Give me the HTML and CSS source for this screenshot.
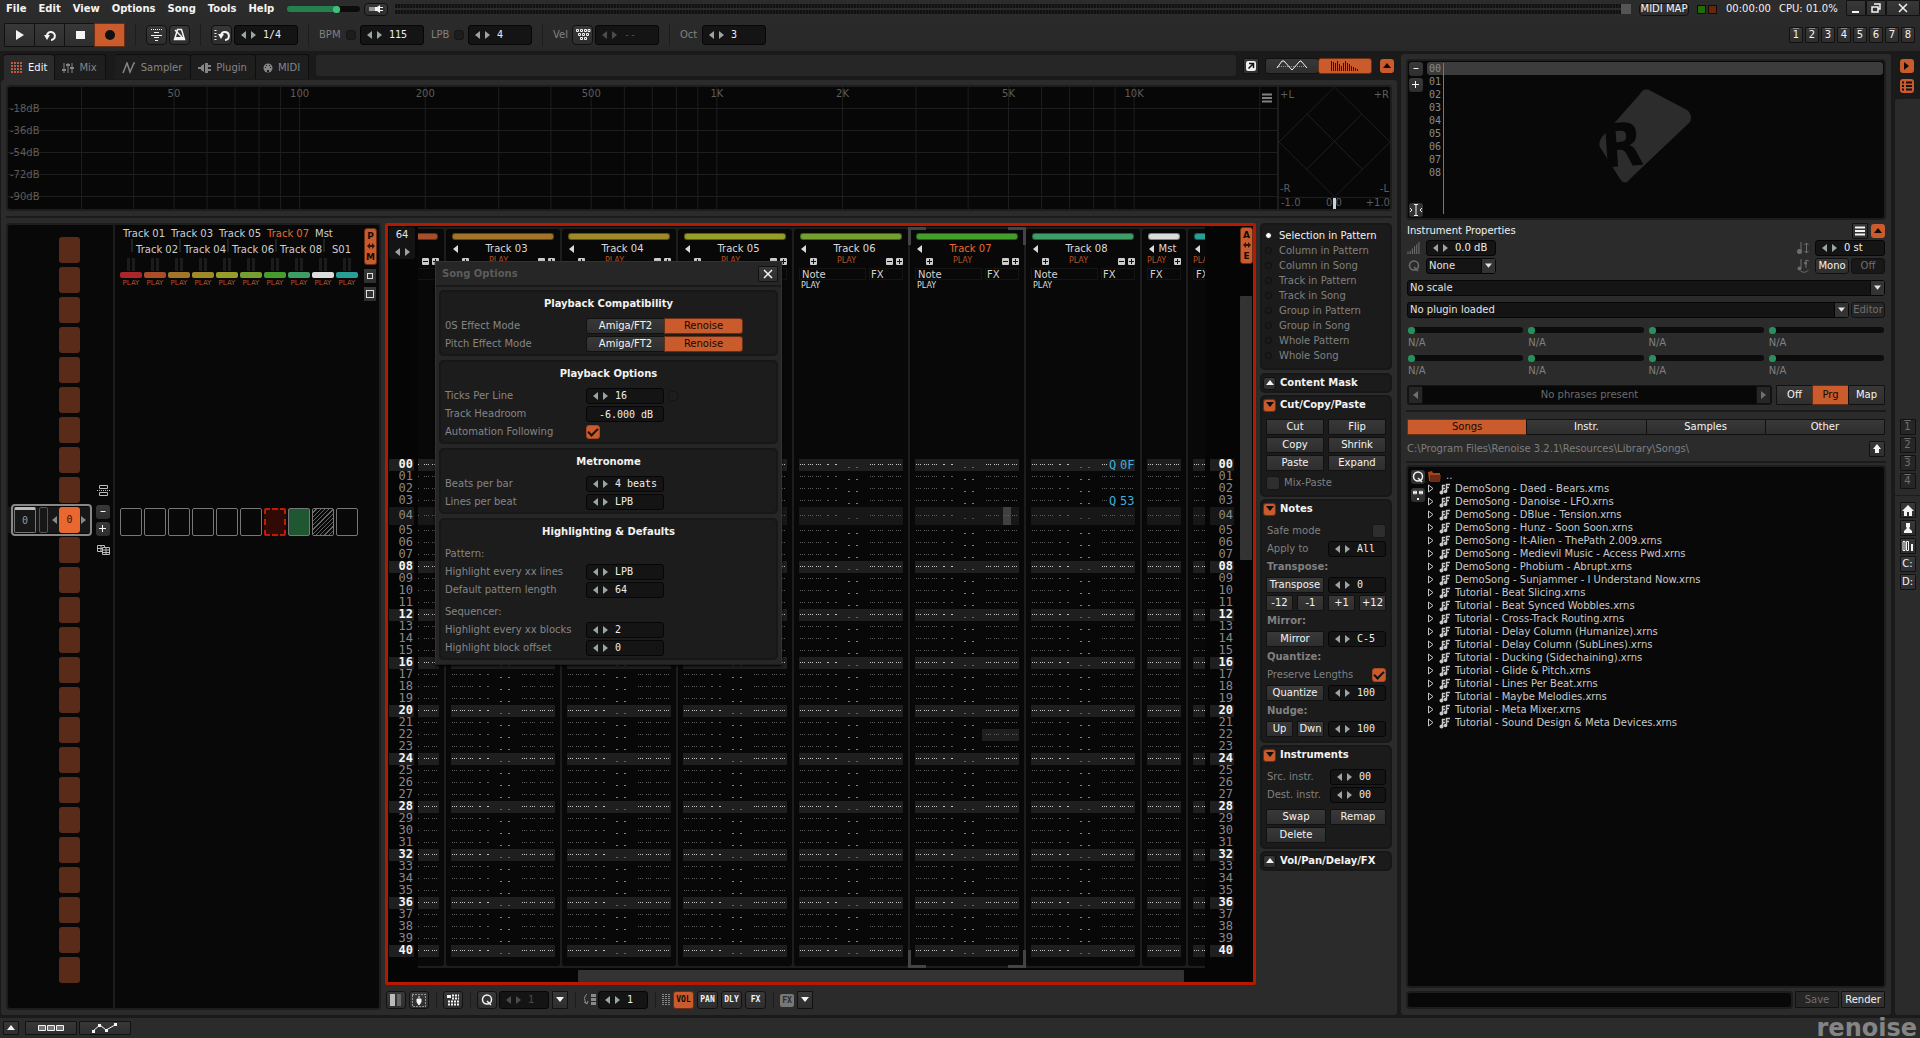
FILE: index.html
```html
<!DOCTYPE html>
<html lang="en">
<head>
<meta charset="utf-8">
<title>Renoise</title>
<link rel="stylesheet" href="styles.css">
</head>
<body>
<svg class="sprite" aria-hidden="true">
  <symbol id="i-play" viewBox="0 0 12 12"><path d="M2 1l8 5-8 5z" fill="currentColor"/></symbol>
  <symbol id="i-loop" viewBox="0 0 14 12"><path d="M4 8a4 4 0 1 1 4 3" fill="none" stroke="currentColor" stroke-width="2"/><path d="M1 6h6l-3 5z" fill="currentColor"/></symbol>
  <symbol id="i-stop" viewBox="0 0 12 12"><path d="M2 2h9v8H2z" fill="currentColor"/></symbol>
  <symbol id="i-rec" viewBox="0 0 12 12"><circle cx="6" cy="6" r="5" fill="#111"/></symbol>
  <symbol id="i-follow" viewBox="0 0 13 13"><path d="M1 1.500h11" stroke="currentColor" stroke-dasharray="1 1"/><path d="M4 4.500h5M1 7.500h11M4 9.500h5M5 12.500h3" stroke="currentColor"/></symbol>
  <symbol id="i-metro" viewBox="0 0 13 13"><path d="M4.500 1.500h4l3 10h-10z" fill="none" stroke="currentColor" stroke-width="1.500"/><path d="M2 2l7 7" stroke="currentColor" stroke-width="1.500"/><path d="M2 9h9v3H2z" fill="currentColor"/></symbol>
  <symbol id="i-blockloop" viewBox="0 0 16 12"><path d="M1.500 1v10" stroke="currentColor" stroke-width="2" stroke-dasharray="1 2"/><path d="M7 6a4 4 0 1 1 4 5" fill="none" stroke="currentColor" stroke-width="2"/><path d="M4 5h6l-3 5z" fill="currentColor"/></symbol>
  <symbol id="i-keys" viewBox="0 0 16 13"><path d="M1.500 1.500h2v2h-2zM5.500 1.500h2v2h-2zM9.500 1.500h2v2h-2zM13 1.500h2v2h-2zM3.500 5.500h2v2h-2zM7.500 5.500h2v2h-2zM11.500 5.500h2v2h-2zM5.500 9.500h2v2h-2zM9.500 9.500h2v2h-2z" fill="none" stroke="currentColor"/></symbol>
  <symbol id="i-plug" viewBox="0 0 16 8"><path d="M1 2h6v4H1z" fill="#999"/><path d="M7 2h2l3-2v8l-3-2H7z" fill="currentColor"/><path d="M12 2.500h3M12 5.500h3" stroke="currentColor"/></symbol>
  <symbol id="i-grid" viewBox="0 0 12 12"><path d="M0 1h12M0 4h12M0 7h12M0 10h12" stroke="currentColor" stroke-width="2" stroke-dasharray="2 1"/></symbol>
  <symbol id="i-mix" viewBox="0 0 12 12"><path d="M2 1v10M6 1v10M10 1v10" stroke="currentColor"/><path d="M0 8h4M4 3h4M8 6h4" stroke="currentColor" stroke-width="2"/></symbol>
  <symbol id="i-wave" viewBox="0 0 14 12"><path d="M1 11L5 1l3 9 4-9h1" fill="none" stroke="currentColor" stroke-width="1.500"/></symbol>
  <symbol id="i-plugin" viewBox="0 0 13 10"><path d="M0 5h4" stroke="currentColor" stroke-width="2"/><path d="M3 3l3-2v8L3 7zM7 0h3v10H7z" fill="currentColor"/><path d="M10 3h3M10 7h3" stroke="currentColor" stroke-width="2"/></symbol>
  <symbol id="i-midi" viewBox="0 0 10 10"><circle cx="5" cy="5" r="4.500" fill="currentColor"/><path d="M2 4h1v1H2zM7 4h1v1H7zM3 2h1v1H3zM6 2h1v1H6zM4 7h2v2H4z" fill="#1d1d1d"/></symbol>
  <symbol id="i-popout" viewBox="0 0 12 12"><rect x="1" y="1" width="10" height="10" rx="2" fill="#eee"/><path d="M4 3.500h4.500V8M8 4L3.500 8.500" stroke="#111" stroke-width="1.500" fill="none"/></symbol>
  <symbol id="i-scope" viewBox="0 0 32 12"><path d="M1 8L6 1h2l8 9 8-9 1 0 6 7" fill="none" stroke="currentColor"/><path d="M1 6.500h30" stroke="currentColor" stroke-dasharray="1 1" opacity=".5"/></symbol>
  <symbol id="i-spec" viewBox="0 0 28 12"><path d="M.5 1v10M2.500 2v9M4.500 3v8M6.500 1v10M8.500 4v7M10.500 6v5M12.500 3v8M14.500 1v10M16.500 3v8M18.500 4v7M20.500 6v5M22.500 7v4M24.500 8v3M26.500 9v2" stroke="#2a1208"/></symbol>
  <symbol id="i-up" viewBox="0 0 8 6"><path d="M0 5l4-5 4 5z" fill="currentColor"/></symbol>
  <symbol id="i-down" viewBox="0 0 8 6"><path d="M0 0h8L4 5z" fill="currentColor"/></symbol>
  <symbol id="i-left" viewBox="0 0 5 8"><path d="M5 0v8L0 4z" fill="currentColor"/></symbol>
  <symbol id="i-right" viewBox="0 0 5 8"><path d="M0 0v8l5-4z" fill="currentColor"/></symbol>
  <symbol id="i-menu" viewBox="0 0 12 10"><path d="M1 1.500h10M1 5h10M1 8.500h10" stroke="currentColor" stroke-width="2"/></symbol>
  <symbol id="i-x" viewBox="0 0 10 10"><path d="M1 1l8 8M9 1L1 9" stroke="currentColor" stroke-width="1.500"/></symbol>
  <symbol id="i-min" viewBox="0 0 10 10"><path d="M1 9h7" stroke="currentColor" stroke-width="2"/></symbol>
  <symbol id="i-restore" viewBox="0 0 10 10"><path d="M3 1h6v5H7M1 4h6v5H1z" fill="none" stroke="currentColor" stroke-width="1.500"/></symbol>
  <symbol id="i-minus" viewBox="0 0 8 8"><path d="M1.500 3.500h5" stroke="currentColor"/></symbol>
  <symbol id="i-plus" viewBox="0 0 8 8"><path d="M0 3.500h7M3.500 0v7" stroke="currentColor"/></symbol>
  <symbol id="i-boxminus" viewBox="0 0 7 7"><rect width="7" height="7" rx="1" fill="#ccc"/><path d="M1 3.500h5" stroke="#111"/></symbol>
  <symbol id="i-boxplus" viewBox="0 0 7 7"><rect width="7" height="7" rx="1" fill="#ccc"/><path d="M1 3.500h5M3.500 1v5" stroke="#111"/></symbol>
  <symbol id="i-harrow" viewBox="0 0 8 6"><path d="M0 3l3-3v2h2V0l3 3-3 3V4H3v2z" fill="#30150a"/></symbol>
  <symbol id="i-split" viewBox="0 0 13 11"><path d="M2.500.5h8v3h-8zM2.500 7.500h8v3h-8z" fill="none" stroke="currentColor"/><path d="M0 5.500h13" stroke="currentColor" stroke-dasharray="1 1"/></symbol>
  <symbol id="i-clone" viewBox="0 0 13 10"><path d="M.5.5h7v6h-7zM4 .5v6M.5 3.500h7" fill="none" stroke="currentColor"/><path d="M5.500 2.500h7v7h-7z" fill="#080808" stroke="currentColor"/><path d="M9 2.500v7M5.500 5h7M5.500 7.500h7" stroke="currentColor"/></symbol>
  <symbol id="i-bars" viewBox="0 0 12 11"><path d="M.5 9v2M2.500 8v3M4.500 6v5M6.500 4v7M8.500 2v9M10.500 0v11" stroke="currentColor"/></symbol>
  <symbol id="i-q" viewBox="0 0 12 12"><circle cx="6" cy="5.500" r="4.500" fill="none" stroke="currentColor" stroke-width="1.500"/><path d="M6 7l4 4" stroke="currentColor" stroke-width="1.500"/></symbol>
  <symbol id="i-notest" viewBox="0 0 13 12"><path d="M4.500 0v9" stroke="currentColor"/><circle cx="3" cy="9.500" r="2.500" fill="currentColor"/><path d="M10 1v10M8 3l2-2 2 2M8 9l2 2 2-2" fill="none" stroke="currentColor"/></symbol>
  <symbol id="i-glide" viewBox="0 0 13 14"><path d="M4.500 0v9M9.500 9V1l3 1" fill="none" stroke="currentColor"/><circle cx="3" cy="9.500" r="2" fill="currentColor"/><circle cx="9" cy="4" r="1.500" fill="currentColor"/><path d="M4 12q4 3 8-1" fill="none" stroke="currentColor"/></symbol>
  <symbol id="i-song" viewBox="0 0 11 12"><path d="M3.500 2v7M7.500 1v7M3 2.500h3M7 1.500h4M3 5.500h3M7 4.500h3" stroke="currentColor" stroke-width="1.500"/><circle cx="2.500" cy="9.500" r="2" fill="currentColor"/><circle cx="6.500" cy="8.500" r="1.800" fill="currentColor"/></symbol>
  <symbol id="i-tri" viewBox="0 0 6 9"><path d="M.5 1l4.500 3.500L.5 8z" fill="none" stroke="currentColor"/></symbol>
  <symbol id="i-folder" viewBox="0 0 13 11"><path d="M0 1l4-1 1 2h7v8H1z" fill="#a8431a"/><path d="M2 4h11l-1 7H2z" fill="#6d2c14"/></symbol>
  <symbol id="i-mask" viewBox="0 0 12 12"><path d="M1 3.500h4M3 1.500v4M7 3.500h4M9 1.500v4M1 2l4 3M5 2L1 5M7 2l4 3M11 2L7 5" stroke="currentColor"/><path d="M5 9h2v2H5z" fill="currentColor"/></symbol>
  <symbol id="i-arrowup" viewBox="0 0 10 10"><path d="M5 0l4 5H7v4H3V5H1z" fill="currentColor"/></symbol>
  <symbol id="i-home" viewBox="0 0 12 11"><path d="M6 0l6 6h-2v5H7V7H5v4H2V6H0z" fill="currentColor"/></symbol>
  <symbol id="i-user" viewBox="0 0 12 11"><path d="M4 0h4v4l-1 1 3 3v2H2V8l3-3-1-1z" fill="currentColor"/></symbol>
  <symbol id="i-lib" viewBox="0 0 12 11"><path d="M1 .5h2v9H1zM4.500.5h2v9h-2z" fill="none" stroke="currentColor"/><path d="M9 3h2v7H9z" fill="currentColor"/></symbol>
  <symbol id="i-cursor" viewBox="0 0 12 12"><path d="M4 .5h4M4 11.500h4M6 1v10M0 4l2 2-2 2M12 4l-2 2 2 2" fill="none" stroke="currentColor"/></symbol>
  <symbol id="i-list" viewBox="0 0 10 10"><path d="M0 1.500h2M0 5h2M0 8.500h2M4 1.500h6M4 5h6M4 8.500h6" stroke="#111" stroke-width="2"/></symbol>
  <symbol id="i-cols" viewBox="0 0 12 12"><path d="M0 0h5v12H0z" fill="#bbb"/><path d="M7 0h4v12H7z" fill="#666"/></symbol>
  <symbol id="i-snap" viewBox="0 0 14 13"><rect x=".5" y=".5" width="13" height="12" fill="none" stroke="currentColor" stroke-dasharray="1 2"/><path d="M7 2v2M5 5h4v3l-2 3-2-3z" fill="currentColor" stroke="currentColor"/></symbol>
  <symbol id="i-dots" viewBox="0 0 12 12"><path d="M0 1h4v3H0z" fill="currentColor"/><path d="M5 1.500h7M5 4.500h7M1 7.500h11M1 10.500h11" stroke="currentColor" stroke-width="2" stroke-dasharray="2 1"/></symbol>
  <symbol id="i-step" viewBox="0 0 14 12"><path d="M5 0Q0 4 5 10M2 8l3 2 1-3" fill="none" stroke="currentColor"/><path d="M9 0h5v3H9zM9 4h5v3H9zM9 8h5v3H9z" fill="currentColor"/></symbol>
  <symbol id="i-dim" viewBox="0 0 8 12"><path d="M1 0v12M4 0v12M7 0v12" stroke="currentColor" stroke-width="2" stroke-dasharray="1 1"/></symbol>
  <symbol id="i-blocks" viewBox="0 0 28 8"><path d="M1.500 1.500h7v5h-7zM10.500 1.500h7v5h-7zM19.500 1.500h7v5h-7z" fill="#777" stroke="currentColor"/></symbol>
  <symbol id="i-env" viewBox="0 0 28 10"><path d="M2 8l7-6 6 5 9-5" fill="none" stroke="currentColor"/><path d="M1 7h3v3H1zM7 1h3v3H7zM14 6h3v3h-3zM23 0h3v3h-3z" fill="currentColor"/></symbol>
</svg>

<header class="top">
  <div class="menubar">
    <nav class="menus" aria-label="Main menu">
      <a href="#file">File</a><a href="#edit">Edit</a><a href="#view">View</a><a href="#options">Options</a><a href="#song">Song</a><a href="#tools">Tools</a><a href="#help">Help</a>
    </nav>
    <input class="range master" type="range" min="0" max="100" value="70" aria-label="Master volume">
    <button class="btn pill" aria-label="Audio connection"><svg width="16" height="8"><use href="#i-plug"/></svg></button>
    <div class="meter"><i></i><i></i></div>
    <button class="btn pill midimap">MIDI MAP</button>
    <div class="leds"><i class="green"></i><i class="red"></i></div>
    <span class="status">00:00:00</span>
    <span class="status">CPU: 01.0%</span>
    <div class="winbtns">
      <button class="btn" aria-label="Minimize"><svg width="10" height="10"><use href="#i-min"/></svg></button>
      <button class="btn" aria-label="Restore"><svg width="10" height="10"><use href="#i-restore"/></svg></button>
      <button class="btn wide" aria-label="Close"><svg width="10" height="10"><use href="#i-x"/></svg></button>
    </div>
  </div>
  <div class="transport">
    <div class="joined play">
      <button class="btn" aria-label="Play"><svg width="12" height="12"><use href="#i-play"/></svg></button>
      <button class="btn" aria-label="Loop"><svg width="14" height="12"><use href="#i-loop"/></svg></button>
      <button class="btn" aria-label="Stop"><svg width="12" height="12"><use href="#i-stop"/></svg></button>
      <button class="btn on" aria-label="Edit mode"><svg width="12" height="12"><use href="#i-rec"/></svg></button>
    </div>
    <i class="vsep"></i>
    <div class="group">
      <button class="btn tool" aria-label="Follow"><svg width="13" height="13"><use href="#i-follow"/></svg></button>
      <button class="btn tool" aria-label="Metronome"><svg width="13" height="13"><use href="#i-metro"/></svg></button>
    </div>
    <i class="vsep"></i>
    <div class="group">
      <button class="btn tool" aria-label="Block loop"><svg width="16" height="12"><use href="#i-blockloop"/></svg></button>
      <span class="stepper tall" data-value="1/4" data-label="Block loop size"></span>
    </div>
    <i class="vsep"></i>
    <div class="group loose bpm">
      <label for="bpm">BPM</label><input type="checkbox" class="tick small" aria-label="Automate BPM"><span class="stepper tall" data-value="115" data-id="bpm"></span>
    </div>
    <div class="group loose second">
      <label for="lpb">LPB</label><input type="checkbox" class="tick small" aria-label="Automate LPB"><span class="stepper tall" data-value="4" data-id="lpb"></span>
    </div>
    <i class="vsep"></i>
    <div class="group">
      <label for="vel">Vel</label>
      <button class="btn tool" aria-label="Keyboard velocity"><svg width="16" height="13"><use href="#i-keys"/></svg></button>
      <span class="stepper tall off" data-value="--" data-id="vel"></span>
    </div>
    <i class="vsep"></i>
    <div class="group oct">
      <label for="oct">Oct</label>
      <span class="stepper tall" data-value="3" data-id="oct"></span>
    </div>
    <div class="presets">
      <button class="btn">1</button><button class="btn">2</button><button class="btn">3</button><button class="btn">4</button><button class="btn">5</button><button class="btn">6</button><button class="btn">7</button><button class="btn">8</button>
    </div>
  </div>
</header>

<main class="workspace">
  <section class="left">
    <div class="tabs">
      <button class="tab active"><svg width="12" height="12"><use href="#i-grid"/></svg>Edit</button>
      <button class="tab"><svg width="12" height="12"><use href="#i-mix"/></svg>Mix</button>
      <button class="tab apart"><svg width="14" height="12"><use href="#i-wave"/></svg>Sampler</button>
      <button class="tab"><svg width="13" height="10"><use href="#i-plugin"/></svg>Plugin</button>
      <button class="tab"><svg width="10" height="10"><use href="#i-midi"/></svg>MIDI</button>
      <div class="tabfill"></div>
      <button class="btn sq" aria-label="Detach"><svg width="12" height="12"><use href="#i-popout"/></svg></button>
      <div class="joined scopes">
        <button class="btn" aria-label="Track scopes"><svg width="32" height="12"><use href="#i-scope"/></svg></button>
        <button class="btn on" aria-label="Spectrum"><svg width="28" height="12"><use href="#i-spec"/></svg></button>
      </div>
      <button class="btn mini on" aria-label="Collapse"><svg width="8" height="6"><use href="#i-up"/></svg></button>
    </div>

    <div class="panel edit">
      <div class="analyser">
        <div class="spectrum">
          <svg id="spectrum" width="100%" height="122"></svg>
          <button class="menuicon" aria-label="Spectrum options"><svg width="12" height="10"><use href="#i-menu"/></svg></button>
        </div>
        <svg class="stereo" width="111" height="122">
          <path d="M55.500 0L111 55 55.500 110 0 55zM28 27l55 55M83 27L28 82M0 110.500h111" />
          <text x="1" y="11">+L</text><text x="110" y="11" text-anchor="end">+R</text>
          <text x="1" y="105">-R</text><text x="110" y="105" text-anchor="end">-L</text>
          <text x="2" y="119">-1.0</text><text x="55" y="119" text-anchor="middle">0.0</text><text x="111" y="119" text-anchor="end">+1.0</text>
          <rect x="54" y="111" width="3" height="11"/>
        </svg>
      </div>
      <hr>

      <div class="editzone">
        <section class="sequencer">
          <div class="slots">
            <div class="slotlist" id="slots"></div>
            <div class="slottools">
              <svg width="13" height="11"><use href="#i-split"/></svg>
              <button class="btn mini" aria-label="Remove pattern"><svg width="8" height="8"><use href="#i-minus"/></svg></button>
              <button class="btn mini" aria-label="Add pattern"><svg width="8" height="8"><use href="#i-plus"/></svg></button>
              <svg width="13" height="10"><use href="#i-clone"/></svg>
            </div>
          </div>
          <div class="matrix">
            <div class="names"><span>Track 01</span><span>Track 03</span><span>Track 05</span><span class="sel">Track 07</span><span>Mst</span></div>
            <div class="names even"><span>Track 02</span><span>Track 04</span><span>Track 06</span><span>Track 08</span><span class="send">S01</span></div>
            <div class="mcols" id="mcols"></div>
            <div class="mcells" id="mcells"></div>
          </div>
          <div class="seqside">
            <button class="btn vtoggle on" aria-label="Pattern or matrix"><b>P</b><svg width="8" height="6"><use href="#i-harrow"/></svg><b>M</b></button>
            <button class="btn mini" aria-label="Small cells"><i class="small"></i></button>
            <button class="btn mini" aria-label="Large cells"><i></i></button>
          </div>
        </section>

        <section class="editor">
          <div class="pattern">
            <div class="gutter">
              <div class="gutterhead"><div class="length"><span>64</span><div><svg width="5" height="8"><use href="#i-left"/></svg><svg width="5" height="8"><use href="#i-right"/></svg></div></div></div>
              <div class="nums"></div>
            </div>
            <div class="tracks" id="tracks"></div>
            <div class="gutter right">
              <div class="gutterhead"></div>
              <div class="nums"></div>
            </div>
            <div class="vscroll">
              <button class="btn vtoggle on" aria-label="Automation or effects"><b>A</b><svg width="8" height="6"><use href="#i-harrow"/></svg><b>E</b></button>
              <i></i>
            </div>
            <div class="hscroll"><i></i></div>
          </div>
          <div class="patbar">
            <button class="btn tool" aria-label="Columns"><svg width="12" height="12"><use href="#i-cols"/></svg></button>
            <button class="btn tool" aria-label="Wrap"><svg width="14" height="13"><use href="#i-snap"/></svg></button>
            <i class="vsep"></i>
            <button class="btn tool" aria-label="Single track edit"><svg width="12" height="12"><use href="#i-dots"/></svg></button>
            <i class="vsep"></i>
            <button class="btn tool" aria-label="Quantize"><svg width="12" height="12"><use href="#i-q"/></svg></button>
            <span class="stepper off" data-value="1" data-label="Quantize lines"></span>
            <button class="btn drop" aria-label="Quantize options"><svg width="8" height="6"><use href="#i-down"/></svg></button>
            <i class="vsep"></i>
            <svg class="dimicon" width="14" height="12"><use href="#i-step"/></svg>
            <span class="stepper" data-value="1" data-label="Edit step"></span>
            <i class="vsep"></i>
            <svg class="dimicon" width="8" height="12"><use href="#i-dim"/></svg>
            <button class="btn tiny on">VOL</button><button class="btn tiny">PAN</button><button class="btn tiny">DLY</button><button class="btn tiny">FX</button>
            <i class="vsep"></i>
            <span class="fxtag">FX</span>
            <button class="btn drop" aria-label="Effect columns"><svg width="8" height="6"><use href="#i-down"/></svg></button>
          </div>

          <div class="dialog" role="dialog" aria-label="Song Options">
            <div class="titlebar"><b>Song Options</b><button class="btn" aria-label="Close dialog"><svg width="10" height="10"><use href="#i-x"/></svg></button></div>
            <div class="sheets">
              <fieldset class="sheet">
                <h2>Playback Compatibility</h2>
                <div class="row"><span>0S Effect Mode</span><div class="joined modes"><button class="btn">Amiga/FT2</button><button class="btn on">Renoise</button></div></div>
                <div class="row"><span>Pitch Effect Mode</span><div class="joined modes"><button class="btn">Amiga/FT2</button><button class="btn on">Renoise</button></div></div>
              </fieldset>
              <fieldset class="sheet">
                <h2>Playback Options</h2>
                <div class="row"><label for="tpl">Ticks Per Line</label><span class="stepper" data-value="16" data-id="tpl"></span><input type="checkbox" class="tick small" aria-label="Automate ticks"></div>
                <div class="row"><label for="headroom">Track Headroom</label><input class="field" id="headroom" value="-6.000 dB"></div>
                <div class="row"><label for="autofol">Automation Following</label><input type="checkbox" class="tick" id="autofol" checked></div>
              </fieldset>
              <fieldset class="sheet">
                <h2>Metronome</h2>
                <div class="row"><label for="bpb">Beats per bar</label><span class="stepper" data-value="4 beats" data-id="bpb"></span></div>
                <div class="row"><label for="lines">Lines per beat</label><span class="stepper" data-value="LPB" data-id="lines"></span></div>
              </fieldset>
              <fieldset class="sheet">
                <h2>Highlighting &amp; Defaults</h2>
                <div class="row">Pattern:</div>
                <div class="row"><label for="hl">Highlight every xx lines</label><span class="stepper" data-value="LPB" data-id="hl"></span></div>
                <div class="row"><label for="dpl">Default pattern length</label><span class="stepper" data-value="64" data-id="dpl"></span></div>
                <div class="row spaced">Sequencer:</div>
                <div class="row"><label for="hb">Highlight every xx blocks</label><span class="stepper" data-value="2" data-id="hb"></span></div>
                <div class="row"><label for="hbo">Highlight block offset</label><span class="stepper" data-value="0" data-id="hbo"></span></div>
              </fieldset>
            </div>
          </div>
        </section>

        <aside class="advanced">
          <fieldset class="card scope">
            <label><input type="radio" name="scope" checked>Selection in Pattern</label>
            <label><input type="radio" name="scope">Column in Pattern</label>
            <label><input type="radio" name="scope">Column in Song</label>
            <label><input type="radio" name="scope">Track in Pattern</label>
            <label><input type="radio" name="scope">Track in Song</label>
            <label><input type="radio" name="scope">Group in Pattern</label>
            <label><input type="radio" name="scope">Group in Song</label>
            <label><input type="radio" name="scope">Whole Pattern</label>
            <label><input type="radio" name="scope">Whole Song</label>
          </fieldset>
          <div class="card"><h3><button class="btn fold" aria-label="Expand"><svg width="8" height="6"><use href="#i-up"/></svg></button>Content Mask</h3></div>
          <div class="card">
            <h3><button class="btn fold on" aria-label="Collapse"><svg width="8" height="6"><use href="#i-down"/></svg></button>Cut/Copy/Paste</h3>
            <div class="body">
              <div class="pair"><button class="btn">Cut</button><button class="btn">Flip</button></div>
              <div class="pair"><button class="btn">Copy</button><button class="btn">Shrink</button></div>
              <div class="pair"><button class="btn">Paste</button><button class="btn">Expand</button></div>
              <label class="line mix"><input type="checkbox" class="tick">Mix-Paste</label>
            </div>
          </div>
          <div class="card">
            <h3><button class="btn fold on" aria-label="Collapse"><svg width="8" height="6"><use href="#i-down"/></svg></button>Notes</h3>
            <div class="body">
              <div class="line between"><label for="safe">Safe mode</label><input type="checkbox" class="tick" id="safe"></div>
              <div class="pair"><label for="apply">Apply to</label><span class="stepper" data-value="All" data-id="apply"></span></div>
              <b class="line">Transpose:</b>
              <div class="pair"><button class="btn">Transpose</button><span class="stepper" data-value="0" data-label="Transpose amount"></span></div>
              <div class="quad"><button class="btn">-12</button><button class="btn">-1</button><button class="btn">+1</button><button class="btn">+12</button></div>
              <b class="line">Mirror:</b>
              <div class="pair"><button class="btn">Mirror</button><span class="stepper" data-value="C-5" data-label="Mirror note"></span></div>
              <b class="line">Quantize:</b>
              <div class="line between"><label for="preserve">Preserve Lengths</label><input type="checkbox" class="tick" id="preserve" checked></div>
              <div class="pair"><button class="btn">Quantize</button><span class="stepper" data-value="100" data-label="Quantize amount"></span></div>
              <b class="line">Nudge:</b>
              <div class="pair"><div class="pair inner"><button class="btn">Up</button><button class="btn">Dwn</button></div><span class="stepper" data-value="100" data-label="Nudge amount"></span></div>
            </div>
          </div>
          <div class="card">
            <h3><button class="btn fold on" aria-label="Collapse"><svg width="8" height="6"><use href="#i-down"/></svg></button>Instruments</h3>
            <div class="body">
              <div class="pair late"><label for="src">Src. instr.</label><span class="stepper" data-value="00" data-id="src"></span></div>
              <div class="pair late"><label for="dst">Dest. instr.</label><span class="stepper" data-value="00" data-id="dst"></span></div>
              <div class="pair late gaptop"><button class="btn">Swap</button><button class="btn">Remap</button></div>
              <div class="pair late"><button class="btn">Delete</button></div>
            </div>
          </div>
          <div class="card"><h3><button class="btn fold" aria-label="Expand"><svg width="8" height="6"><use href="#i-up"/></svg></button>Vol/Pan/Delay/FX</h3></div>
        </aside>
      </div>
    </div>
  </section>

  <section class="panel instruments">
    <div class="instbox">
      <div class="instbtns">
        <button class="btn mini" aria-label="Remove instrument"><svg width="8" height="8"><use href="#i-minus"/></svg></button>
        <button class="btn mini" aria-label="Add instrument"><svg width="8" height="8"><use href="#i-plus"/></svg></button>
        <button class="btn mini last" aria-label="Rename"><svg width="12" height="12"><use href="#i-cursor"/></svg></button>
      </div>
      <ol class="instlist"><li class="sel">00</li><li>01</li><li>02</li><li>03</li><li>04</li><li>05</li><li>06</li><li>07</li><li>08</li></ol>
      <svg class="emblem" width="94" height="96" viewBox="0 0 94 96">
        <path d="M41 5Q45 -2 52 2L88 21Q94 26 91 33L31 90Q26 97 21 90L16 82 1 58Q-1 53 3 48z" fill="#2c2c2c"/>
        <text x="4" y="78" fill="#080808" transform="rotate(-4 10 78)">R</text>
      </svg>
    </div>

    <div class="prophead"><h2>Instrument Properties</h2><button class="btn sq" aria-label="Menu"><svg width="12" height="10"><use href="#i-menu"/></svg></button><button class="btn mini on" aria-label="Collapse"><svg width="8" height="6"><use href="#i-up"/></svg></button></div>
    <div class="prow"><svg class="picon" width="14" height="12"><use href="#i-bars"/></svg><span class="stepper sans" data-value="0.0 dB" data-label="Volume"></span><i class="fill"></i><svg class="picon" width="14" height="12"><use href="#i-notest"/></svg><span class="stepper sans" data-value="0 st" data-label="Transpose"></span></div>
    <div class="prow"><svg class="picon" width="14" height="12"><use href="#i-q"/></svg><span class="select none"><select aria-label="Quantization"><option>None</option></select><svg width="8" height="6"><use href="#i-down"/></svg></span><i class="fill"></i><svg class="picon" width="14" height="14"><use href="#i-glide"/></svg><button class="btn p34">Mono</button><button class="btn p34 disabled deep">Off</button></div>
    <div class="prow wide"><span class="select"><select aria-label="Scale"><option>No scale</option></select><svg width="8" height="6"><use href="#i-down"/></svg></span></div>
    <div class="prow wide"><span class="select"><select aria-label="Plugin"><option>No plugin loaded</option></select><svg width="8" height="6"><use href="#i-down"/></svg></span><button class="btn p34 disabled">Editor</button></div>
    <div class="macros">
      <label><input type="range" class="range" value="0">N/A</label><label><input type="range" class="range" value="0">N/A</label><label><input type="range" class="range" value="0">N/A</label><label><input type="range" class="range" value="0">N/A</label>
      <label><input type="range" class="range" value="0">N/A</label><label><input type="range" class="range" value="0">N/A</label><label><input type="range" class="range" value="0">N/A</label><label><input type="range" class="range" value="0">N/A</label>
    </div>
    <div class="phrases">
      <div class="phrasebox"><button class="btn disabled" aria-label="Previous phrase"><svg width="5" height="8"><use href="#i-left"/></svg></button><span>No phrases present</span><button class="btn disabled" aria-label="Next phrase"><svg width="5" height="8"><use href="#i-right"/></svg></button></div>
      <div class="joined"><button class="btn">Off</button><button class="btn on">Prg</button><button class="btn">Map</button></div>
    </div>
    <hr>
    <div class="joined browse"><button class="btn on">Songs</button><button class="btn">Instr.</button><button class="btn">Samples</button><button class="btn">Other</button></div>
    <div class="path"><span>C:\Program Files\Renoise 3.2.1\Resources\Library\Songs\</span><button class="btn sq" aria-label="Parent folder"><svg width="10" height="10"><use href="#i-arrowup"/></svg></button></div>
    <hr>
    <div class="browser">
      <div class="browsebtns"><button class="btn mini" aria-label="Search"><svg width="12" height="12"><use href="#i-q"/></svg></button><button class="btn mini" aria-label="File filter"><svg width="12" height="12"><use href="#i-mask"/></svg></button></div>
      <ul id="files"></ul>
    </div>
    <div class="saverow"><input type="text" aria-label="File name"><button class="btn disabled">Save</button><button class="btn">Render</button></div>
  </section>

  <aside class="strip">
    <div class="striptop">
      <button class="btn mini on" aria-label="Hide browser"><svg width="5" height="8"><use href="#i-right"/></svg></button>
      <button class="btn mini on" aria-label="List view"><svg width="10" height="10"><use href="#i-list"/></svg></button>
    </div>
    <div class="stripbody">
      <button class="btn sq disabled num-preset">1</button><button class="btn sq disabled num-preset">2</button><button class="btn sq disabled num-preset">3</button><button class="btn sq disabled num-preset">4</button>
      <hr>
      <button class="btn sq" aria-label="Home"><svg width="12" height="11"><use href="#i-home"/></svg></button>
      <button class="btn sq" aria-label="User library"><svg width="12" height="11"><use href="#i-user"/></svg></button>
      <button class="btn sq" aria-label="Library"><svg width="12" height="11"><use href="#i-lib"/></svg></button>
      <button class="btn sq">C:</button>
      <button class="btn sq">D:</button>
    </div>
  </aside>
</main>

<footer class="bottom">
  <button class="btn arrow" aria-label="Show lower panel"><svg width="8" height="6"><use href="#i-up"/></svg></button>
  <button class="btn" aria-label="Track DSPs"><svg width="28" height="8"><use href="#i-blocks"/></svg></button>
  <button class="btn" aria-label="Automation"><svg width="28" height="10"><use href="#i-env"/></svg></button>
  <strong class="brand">renoise</strong>
</footer>
<script src="script.js"></script>
</body>
</html>
```

FILE: styles.css
```css
:root {
  --panel: #2b2b2b;
  --gap: #1a1a1a;
  --well: #080808;
  --accent: #ca5b2c;
  --text: #e4e4e4;
  --dim: #808080;
  --mono: "DejaVu Sans Mono", "Liberation Mono", monospace;
}

* { box-sizing: border-box; }

body {
  margin: 0;
  min-height: 100vh;
  display: flex;
  flex-direction: column;
  background: var(--gap);
  color: var(--text);
  font: 10px/14px "DejaVu Sans", Verdana, sans-serif;
}

.sprite { position: absolute; width: 0; height: 0; }
svg { display: block; flex: none; }
a { color: inherit; text-decoration: none; }
h2, h3, ul, ol, fieldset { margin: 0; padding: 0; border: 0; min-width: 0; list-style: none; }
button, input, select { font: inherit; color: inherit; margin: 0; padding: 0; border: 0; background: none; }
hr { width: 100%; height: 2px; margin: 0; border: 0; background: #1b1b1b; }

/* Buttons */
.btn {
  display: inline-flex;
  align-items: center;
  justify-content: center;
  flex: none;
  height: 16px;
  border: 1px solid #111;
  border-radius: 1px;
  background: linear-gradient(#383838, #2e2e2e);
  color: #f4f4f4;
  line-height: 12px;
  white-space: nowrap;
}
.btn.on { background: var(--accent); border-color: #6a2e15; color: #140a05; }
.btn.disabled { color: #707070; background: #262626; }
.btn.deep { background: #181818; }
.btn.mini { width: 14px; height: 14px; border: 0; border-radius: 3px; }
.btn.sq { width: 16px; }
.btn.drop { width: 16px; height: 18px; }
.joined { display: flex; }
.joined .btn { flex: 1 1 0; }
.joined .btn + .btn { margin-left: -1px; }

/* Steppers and inputs */
.stepper, .field, .select {
  display: flex;
  align-items: center;
  width: 78px;
  height: 16px;
  border: 1px solid #060606;
  border-radius: 3px;
  background: #141414;
  font-family: var(--mono);
}
.stepper { padding-left: 3px; color: #eee; overflow: hidden; }
.stepper.tall { width: 64px; height: 20px; }
.stepper.sans { width: 70px; font-family: inherit; }
.stepper button { display: flex; flex: none; width: 10px; justify-content: center; align-items: center; color: #9aa5a5; }
.stepper input { flex: 1; width: 0; min-width: 0; margin-left: 5px; height: 14px; }
.stepper.off, .stepper.off button { color: #4c4c4c; }
.field { text-align: center; padding-left: 2px; color: #eee; }
.select { width: 100%; font-family: inherit; }
.select select { flex: 1; appearance: none; padding-left: 2px; height: 14px; line-height: 14px; }
.select svg { width: 14px; height: 14px; padding: 4px 3px; background: #333; border-left: 1px solid #060606; }

.tick {
  appearance: none;
  flex: none;
  display: grid;
  place-items: center;
  width: 14px;
  height: 14px;
  border-radius: 3px;
  background: #2b2b2b;
  border: 1px solid #161616;
}
.tick.small { width: 10px; height: 10px; background: #1d1d1d; border-color: #151515; }
.tick:checked { background: var(--accent); border-color: #a9481f; }
.tick:checked::after { content: ""; width: 8px; height: 4px; margin-top: -2px; border: solid #111; border-width: 0 0 2px 2px; transform: rotate(-45deg); }

.range { appearance: none; display: block; width: 100%; height: 6px; border-radius: 3px; background: #0c0c0c; }
.range::-webkit-slider-thumb { appearance: none; width: 7px; height: 7px; border-radius: 3px; background: #27905c; }

/* Top bar */
.top { height: 51px; background: linear-gradient(#2c2c2c, #282828); }
.menubar { display: flex; align-items: center; height: 18px; }
.menus { display: flex; gap: 12px; margin-left: 6px; font-weight: bold; color: #f4f4f4; }
.master { width: 73px; margin-left: 13px; background: linear-gradient(90deg, #258050 66%, #0c0c0c 66%); }
.master::-webkit-slider-thumb { background: #3cc47c; }
.btn.pill { height: 13px; width: 24px; margin-left: 4px; border-radius: 4px; }
.meter { flex: 1; display: grid; gap: 2px; margin: 0 8px 0 7px; border-right: 10px solid #555; }
.meter i { height: 4px; background: repeating-linear-gradient(90deg, #121212 0 2px, #1e1e1e 2px 3px); }
.btn.midimap { width: 50px; margin: 0; }
.leds { display: flex; gap: 2px; margin: 0 9px 0 8px; }
.leds i { width: 9px; height: 9px; border: 1px solid #0c0c0c; }
.leds .green { background: #236a08; }
.leds .red { background: #6a2608; }
.status { width: 53px; white-space: nowrap; color: #f0f0f0; }
.status + .status { width: 60px; margin-right: 7px; }
.winbtns { display: flex; align-self: flex-start; }
.winbtns .btn { width: 20px; }
.winbtns .wide { width: 34px; }

.transport { display: flex; align-items: center; height: 33px; padding: 0 5px 0 4px; color: var(--dim); }
.play { width: 121px; }
.play .btn { height: 24px; }
.vsep { flex: none; width: 1px; height: 22px; margin: 0 10px; background: #1d1d1d; }
.group { display: flex; align-items: center; gap: 2px; }
.group label { min-width: 17px; }
.group.loose { gap: 4px; }
.group.bpm label { min-width: 23px; }
.group.loose.second { margin-left: 7px; }
.group.second label { min-width: 19px; }
.group.oct label { min-width: 20px; }
.transport .tool { width: 21px; height: 20px; border-radius: 4px; }
.presets { display: flex; gap: 2px; margin-left: auto; }
.presets .btn { width: 14px; height: 16px; text-decoration: overline #888; }

/* Workspace */
.workspace {
  flex: 1;
  display: grid;
  grid-template-columns: minmax(0, 1fr) 490px 25px;
  gap: 4px;
  padding: 3px 0 3px 1px;
}
.panel { background: var(--panel); border-radius: 3px; }
.left { display: flex; flex-direction: column; }

.tabs { display: flex; align-items: flex-start; height: 26px; padding-left: 3px; }
.tab {
  display: flex;
  align-items: center;
  gap: 5px;
  height: 25px;
  padding: 1px 8px 0 7px;
  border: solid #0e0e0e;
  border-width: 1px 1px 0 0;
  border-radius: 3px 3px 0 0;
  background: #1e1e1e;
  color: #858585;
}
.tab.active { height: 26px; padding-right: 7px; background: var(--panel); color: #f4f4f4; }
.tab.active svg { color: #b85c42; }
.tab.apart { margin-left: 9px; }
.tabfill { flex: 1; height: 21px; margin: 1px 7px 0; border-radius: 3px; background: #262626; }
.tabs .btn { margin-top: 4px; }
.scopes { width: 107px; margin: 0 8px 0 6px; }
.scopes .btn { height: 16px; border-radius: 3px; }
.tabs .mini { margin: 5px 3px 0 0; }

.edit { flex: 1; display: flex; flex-direction: column; gap: 5px; padding: 5px; }
.analyser { display: flex; border: 2px solid #1d1d1d; border-radius: 4px; background: #070707; }
.spectrum { flex: 1; position: relative; border-right: 2px solid #1d1d1d; }
.menuicon { position: absolute; right: 4px; top: 6px; color: #808080; }
.analyser text { fill: #5c5c5c; font-size: 10px; }
.analyser line, .stereo path { stroke: #1e1e1e; fill: none; stroke-width: 1; }
.stereo rect { fill: #d0d0d0; }

.editzone { flex: 1; display: grid; grid-template-columns: 375px minmax(0, 1fr) 132px; gap: 4px; }

/* Sequencer and matrix */
.sequencer { display: grid; grid-template-columns: 107px minmax(0, 1fr) 15px; border: 2px solid #1d1d1d; border-radius: 4px; background: var(--well); }
.slots { display: flex; gap: 4px; border-right: 2px solid #1d1d1d; }
.slotlist { display: grid; align-content: start; gap: 4px; width: 84px; padding-top: 12px; }
.slot { display: grid; grid-template-columns: 31px 12px 8px 21px 7px; align-items: center; height: 26px; position: relative; }
.slot > b { grid-column: 4; height: 26px; border-radius: 3px; background: #5a2b18; }
.slot.cur::before { content: ""; position: absolute; inset: -3px 0 -3px 3px; border: 2px solid #888; border-radius: 4px; }
.slot.cur > b { background: #e8682f; color: #3a1405; font: 10px/26px var(--mono); text-align: center; }
.slot .cell { grid-column: 1; width: 22px; height: 26px; margin-left: 6px; border: 1px solid #777; border-top: 3px solid #bbb; border-radius: 2px; color: #999; font: 10px/22px var(--mono); text-align: center; }
.slot .bar { width: 9px; height: 26px; border: 1px solid #555; border-radius: 2px; }
.slot svg { color: #888; margin-left: 1px; }
.slottools { display: grid; align-content: start; justify-items: center; padding-top: 260px; color: #bbb; }
.slottools .btn { margin-top: 3px; }
.slottools svg + .btn { margin-top: 9px; }
.slottools > svg:last-child { margin-top: 9px; }
.matrix { padding: 1px 0 0 5px; color: #cfcfcf; }
.names { display: grid; grid-template-columns: repeat(5, 48px); height: 16px; line-height: 16px; margin-left: 3px; white-space: nowrap; }
.names.even { margin-left: 16px; }
.names.even span { position: relative; }
.names.even .send { padding-left: 4px; }
.names.even span::before { content: ""; position: absolute; left: -5px; top: -3px; width: 2px; height: 13px; background: #222; }
.names .sel, .track.sel .tname span { color: #e8682f; }
.mcols, .mcells { display: grid; grid-template-columns: repeat(10, 22px); gap: 2px; }
.mcol { display: grid; justify-items: center; gap: 1px; }
.mcol::before { content: ""; width: 8px; height: 13px; background: linear-gradient(90deg, #1c1c1c 3px, transparent 3px 5px, #1c1c1c 5px); }
.mcol i { width: 22px; height: 6px; border-radius: 2px; }
.playtag { color: #b5512a; font-size: 8px; line-height: 8px; }
.mcol .playtag { font-size: 7px; }
.mcells { margin-top: 221px; }
.mcells i { height: 28px; border: 1px solid #777; border-radius: 2px; }
.mcells .rec { border: 2px dashed #c01c00; background: #300a04; }
.mcells .fill { background: #1f5733; }
.mcells .hatch { background: repeating-linear-gradient(135deg, #080808 0 2px, #666 2px 3px); }
.seqside { display: grid; align-content: start; gap: 4px; padding-top: 3px; }
.seqside .mini { width: 12px; border-radius: 0; }
.seqside i { width: 8px; height: 8px; border: 1px solid #ddd; }
.seqside i.small { width: 6px; height: 6px; }
.btn.vtoggle { flex-direction: column; justify-content: space-around; width: 13px; height: 37px; padding: 1px 0; border-radius: 3px; font-size: 9px; line-height: 10px; }

/* Pattern editor */
.editor { position: relative; display: flex; flex-direction: column; gap: 6px; }
.pattern {
  display: grid;
  grid-template-columns: 30px minmax(0, 1fr) 35px 13px;
  padding-top: 1px;
  border: 3px solid #b51a00;
  border-radius: 2px;
  background: #050505;
}
.gutterhead { height: 232px; }
.gutter { padding: 0 4px 0 1px; }
.gutter.right { padding: 0 6px 0 5px; }
.length { display: grid; justify-items: center; gap: 3px; height: 32px; width: 26px; padding-top: 1px; border-radius: 2px; background: #141414; }
.length div { display: flex; gap: 5px; color: #9aa5a5; }
.num { height: 12px; padding-right: 1px; font: 12px/10px var(--mono); text-align: right; color: #8a8a8a; }
.hl { background: #1f1f1f; }
.num.hl { font-weight: bold; color: #f4f4f4; }
.cur { background: #171717; }
.num.cur { height: 18px; line-height: 16px; }

.tracks { display: flex; overflow: hidden; padding: 2px; gap: 2px; background: #1d1d1d; }
.track { position: relative; flex: none; width: 114px; padding: 4px 5px 9px; background: var(--well); border-radius: 3px; }
.track.narrow { width: 44px; }
.track.first { margin-left: -90px; }
.track .bar { display: block; height: 7px; margin: 0 1px; border-radius: 3px; border: 1px solid #00000066; }
.tname { display: flex; align-items: center; height: 17px; padding-left: 2px; color: #dadada; }
.tname span { flex: 1; text-align: center; white-space: nowrap; }
.tctl { display: flex; align-items: center; height: 8px; gap: 3px; }
.tctl .playtag { flex: 1; text-align: center; }
.tctl > svg:first-child { margin: 0 -10px 0 11px; }
.narrow .tctl .playtag { text-align: left; }
.theads { display: flex; gap: 3px; margin-top: 3px; line-height: 11px; color: #d4d4d4; }
.theads span { flex: none; width: 34px; height: 12px; padding-left: 1px; border: 1px solid #141414; }
.theads span:first-child { flex: 1; padding-left: 2px; }
.tplay { height: 179px; padding: 1px 0 0 2px; font-size: 8px; line-height: 9px; color: #ddd; }
.line-row { position: relative; height: 12px; color: #5e5e5e; overflow: hidden; }
.line-row.cur { height: 18px; padding-top: 3px; }
.line-row.hl { color: #c4c4c4; }
.line-row path { stroke: currentColor; }
.line-row path.vol { stroke: #8a8a1e; }
.line-row.hl path.vol { stroke: #7d6420; }
.line-row.cur path.vol { stroke: #4a4a4a; }
.line-row text { fill: #3fb0da; font: 12px var(--mono); }
.cursor { fill: #404040; }
.selrange { fill: #1f1f1f; }
.track.sel::before, .track.sel::after { content: ""; position: absolute; left: -2px; right: -2px; height: 18px; background: linear-gradient(#444, #444) left / 3px 100% no-repeat, linear-gradient(#444, #444) right / 3px 100% no-repeat, linear-gradient(90deg, #444 18px, transparent 18px calc(100% - 18px), #444 calc(100% - 18px)) var(--edge-side) / 100% 3px no-repeat; }
.track.sel::before { --edge-side: top; top: -2px; }
.track.sel::after { --edge-side: bottom; bottom: -2px; }
.vscroll i { display: block; height: 264px; margin-top: 32px; background: #333; width: 12px; border-radius: 1px; }
.hscroll { grid-column: 2; height: 14px; padding-top: 2px; }
.hscroll i { display: block; width: 77%; height: 12px; margin-left: 20.3%; background: #333; border-radius: 1px; }

.patbar { display: flex; align-items: center; gap: 3px; height: 18px; padding-left: 1px; }
.patbar .tool { width: 20px; height: 18px; border-radius: 3px; }
.patbar .vsep { height: 16px; margin: 0 3px 0 4px; }
.patbar .stepper { width: 50px; height: 18px; margin-left: -1px; }
.patbar .tiny { width: 21px; height: 18px; border-radius: 3px; font: bold 8px/16px var(--mono); }
.dimicon { color: #8a8a8a; }
.fxtag { width: 14px; height: 13px; border-radius: 2px; background: #777; color: #2b2b2b; font: bold 8px/13px var(--mono); text-align: center; }

/* Song Options dialog */
.dialog { position: absolute; left: 50px; top: 38px; width: 347px; background: #262626; border: 1px solid #333; border-bottom-color: #1c1c1c; box-shadow: 0 1px 2px #000; color: #858585; }
.titlebar { display: flex; align-items: center; justify-content: space-between; height: 25px; padding: 0 3px 0 6px; border-bottom: 2px solid #191919; color: #5c5c5c; }
.titlebar .btn { width: 20px; }
.sheets { display: grid; gap: 4px; padding: 3px 3px 4px; }
.sheet { padding: 3px 4px 1px; border: 2px solid #171717; border-radius: 5px; background: #1c1c1c; }
.sheet h2 { margin-bottom: 4px; font: bold 10px/18px "DejaVu Sans", sans-serif; text-align: center; color: #f2f2f2; }
.row { display: flex; align-items: center; height: 18px; }
.row.spaced { margin-top: 4px; }
.row > :first-child { width: 141px; }
.row .small { margin-left: 4px; }
.modes { width: 157px; }
.modes .btn:first-child { border-radius: 3px 0 0 3px; }
.modes .btn:last-child { border-radius: 0 3px 3px 0; }

/* Advanced edit */
.advanced { display: flex; flex-direction: column; gap: 2px; color: var(--dim); }
.card { padding: 0 4px; border: 2px solid #171717; border-radius: 5px; background: #1b1b1b; }
.card.scope { padding: 3px 2px 5px; margin-bottom: 1px; }
.scope label { display: flex; align-items: center; gap: 7px; height: 15px; padding-left: 1px; white-space: nowrap; }
.scope label:has(:checked) { color: #f2f2f2; }
.scope input { appearance: none; width: 7px; height: 7px; border: 1px solid #0d0d0d; border-radius: 50%; }
.scope input:checked { background: #fff; }
.card h3 { display: flex; align-items: center; gap: 4px; height: 16px; margin-left: -3px; font: bold 10px/16px "DejaVu Sans", sans-serif; color: #f2f2f2; }
.fold { width: 13px; height: 13px; border-radius: 3px; }
.body { padding: 5px 0 3px; display: grid; }
.line, .pair, .quad { display: flex; align-items: center; height: 18px; gap: 4px; }
.between { justify-content: space-between; }
.mix { margin-top: 2px; }
.mix .tick, .between .tick { background-color: #2e2e2e; }
.between .tick:checked { background: var(--accent); }
.pair { display: grid; grid-template-columns: 1fr 1fr; }
.pair.late { grid-template-columns: 60px 1fr; }
.pair > *, .quad > * { width: auto; min-width: 0; }
.pair label { white-space: nowrap; padding-left: 1px; }
.line label, b.line { padding-left: 1px; }
.quad > * { flex: 1; }
.pair.inner { height: auto; }
.gaptop { margin-top: 4px; }

/* Instruments column */
.instruments { display: flex; flex-direction: column; padding: 5px 5px 6px; }
.instbox { position: relative; display: flex; height: 161px; padding: 1px; border: 2px solid #1d1d1d; border-radius: 4px; background: var(--well); }
.instbtns { display: flex; flex-direction: column; gap: 2px; width: 18px; }
.instbtns .last { margin-top: auto; }
.instlist { flex: 1; position: relative; font: 10px/13px var(--mono); color: #8a8a8a; }
.instlist li { padding-left: 2px; }
.instlist .sel { background: #3c3c3c; border-radius: 3px; }
.instlist::after { content: ""; position: absolute; left: 16px; top: 1px; bottom: 3px; width: 1px; background: #777; }
.emblem { position: absolute; left: 191px; top: 28px; }
.emblem text { font: bold 60px "DejaVu Sans Condensed", "DejaVu Sans", sans-serif; }
.prophead { display: flex; align-items: center; height: 17px; gap: 3px; padding: 0 1px; margin-top: 2px; }
.prophead h2 { flex: 1; font: 10px/16px "DejaVu Sans", sans-serif; color: #f0f0f0; }
.prow { display: flex; align-items: center; gap: 2px; height: 18px; padding: 0 1px; }
.prow .picon { margin-right: 3px; color: #6e6e6e; }
.fill { flex: 1; }
.select.none { width: 70px; }
.p34 { width: 34px; border-radius: 3px; }
.prow.wide { margin-top: 4px; }
.macros { display: grid; grid-template-columns: repeat(4, 1fr); gap: 6px 5px; margin: 8px 2px 0; color: var(--dim); }
.macros label { display: grid; gap: 3px; line-height: 13px; }
.phrases { display: flex; align-items: center; gap: 4px; margin: 8px 1px 5px; }
.phrasebox { flex: 1; display: flex; justify-content: space-between; align-items: center; height: 20px; border: 1px solid #141414; border-radius: 3px; background: var(--well); color: #6c6c6c; }
.phrasebox .btn { width: 15px; height: 18px; }
.phrases .joined { width: 109px; }
.phrases .joined .btn { height: 20px; }
.browse { margin: 7px 1px 6px; }
.path { display: flex; align-items: center; justify-content: space-between; padding: 0 1px; margin-bottom: 4px; color: #7e7e7e; }
.browser { flex: 1; display: flex; gap: 3px; margin: 2px 0 3px; padding: 3px; border: 2px solid #1d1d1d; border-radius: 4px; background: var(--well); }
.browsebtns { display: grid; align-content: start; gap: 4px; }
.browser li { display: flex; align-items: center; gap: 5px; height: 13px; color: #c8c8c8; white-space: nowrap; }
.browser li:first-child { height: 12px; }
.saverow { display: flex; gap: 2px; padding-right: 1px; }
.saverow input { flex: 1; height: 18px; border: 2px solid #1d1d1d; border-radius: 4px; background: var(--well); }
.saverow .btn { width: 44px; height: 17px; }

/* Right strip */
.strip { display: flex; flex-direction: column; }
.striptop { display: grid; gap: 6px; justify-content: center; padding: 5px 2px 6px 0; }
.stripbody { flex: 1; display: flex; flex-direction: column; align-items: center; gap: 2px; padding: 320px 0 0; background: var(--panel); border-radius: 3px 0 0 3px; }
.stripbody hr { height: 1px; margin: 4px 0; }
.num-preset { text-decoration: overline; }

/* Bottom bar */
.bottom { display: flex; align-items: center; gap: 2px; height: 20px; padding: 0 3px; background: var(--panel); }
.bottom .btn { width: 52px; height: 14px; }
.bottom .arrow { width: 16px; margin-right: 4px; }
.brand { margin-left: auto; color: #858585; font-size: 24px; line-height: 20px; }
```

FILE: script.js
```js
const icon = (name, w, h) => `<svg width="${w}" height="${h}"><use href="#i-${name}"/></svg>`;

// Numeric fields with previous / next arrows
document.querySelectorAll('.stepper').forEach(el => {
  const { value, id, label } = el.dataset;
  const name = id ? `id="${id}"` : `aria-label="${label}"`;
  el.innerHTML = `<button aria-label="Decrease">${icon('left', 5, 8)}</button><button aria-label="Increase">${icon('right', 5, 8)}</button><input ${name} value="${value}">`;
});

// Logarithmic frequency grid
const freqs = [30, 40, 50, 60, 70, 80, 90, 100, 200, 300, 400, 500, 600, 700, 800, 900, 1000, 2000, 3000, 4000, 5000, 6000, 7000, 8000, 9000, 10000, 20000];
const named = { 50: '50', 100: '100', 200: '200', 500: '500', 1000: '1K', 2000: '2K', 5000: '5K', 10000: '10K' };
let grid = '';
freqs.forEach(f => {
  const x = (22.98 + 32.88 * Math.log10(f / 100)).toFixed(2) + '%';
  grid += `<line x1="${x}" x2="${x}" y1="0" y2="122"/>`;
  if (named[f]) grid += `<text x="${x}" y="10" text-anchor="middle">${named[f]}</text>`;
});
[18, 36, 54, 72, 90].forEach((db, i) => {
  const y = 21.5 + 22 * i;
  grid += `<line x1="0" x2="100%" y1="${y}" y2="${y}"/><text x="2" y="${y + 3}">-${db}dB</text>`;
});
document.getElementById('spectrum').innerHTML = grid;

// Pattern sequence
document.getElementById('slots').innerHTML = Array.from({ length: 25 }, (_, i) => i === 9
  ? `<div class="slot cur"><span class="cell">0</span><span class="bar"></span>${icon('left', 5, 8)}<b>0</b>${icon('right', 5, 8)}</div>`
  : '<div class="slot"><b></b></div>').join('');

// Matrix
const colors = ['#aa262a', '#a84e2b', '#a27528', '#9e8a28', '#989d28', '#759f2e', '#459d2c', '#3e9c66', '#dcdcdc', '#289e94'];
document.getElementById('mcols').innerHTML = colors.map(c => `<div class="mcol"><i style="background:${c}"></i><span class="playtag">PLAY</span></div>`).join('');
document.getElementById('mcells').innerHTML = colors.map((c, i) => `<i class="${{ 6: 'rec', 7: 'fill', 8: 'hatch' }[i] || ''}"></i>`).join('');

// Pattern lines
const lines = Array.from({ length: 41 }, (_, i) => i);
const state = i => i === 4 ? 'cur' : i % 4 === 0 ? 'hl' : '';
document.querySelectorAll('.nums').forEach(el => {
  el.innerHTML = lines.map(i => `<div class="num ${state(i)}">${String(i).padStart(2, '0')}</div>`).join('');
});

const dots = (...xs) => xs.map(x => `M${x} 5.5h1m1 0h1m1 0h1`).join('');
const effects = { 0: '0F', 3: '53' };
function lineRow(track, i) {
  let body;
  if (track.narrow) {
    body = `<path d="${dots(1, 9, 19, 27)}"/>`;
  } else {
    const fx = track.n === 8 ? effects[i] : null;
    body = `<path d="${dots(1, 9, 17)}M28 5.5h2M36 5.5h2${fx ? dots(71) : dots(71, 79, 89, 97)}"/><path class="vol" d="M49 8.5h2M57 8.5h2"/>`;
    if (fx) body += `<text x="78" y="10">Q</text><text x="89" y="10">${fx}</text>`;
    if (track.n === 7 && i === 4) body = `<rect class="cursor" x="88" y="-3" width="8" height="18"/>` + body;
    if (track.n === 7 && i === 22) body = `<rect class="selrange" x="67" y="0" width="37" height="12"/>` + body;
  }
  return `<div class="line-row ${state(i)}"><svg width="104" height="12" overflow="visible">${body}</svg></div>`;
}

const tracks = [2, 3, 4, 5, 6, 7, 8].map(n => ({ n, name: 'Track 0' + n, color: colors[n - 1] }));
tracks.push({ name: 'Mst', color: colors[8], narrow: true }, { name: 'S01', color: colors[9], narrow: true });
document.getElementById('tracks').innerHTML = tracks.map(t => `
  <div class="track ${t.narrow ? 'narrow' : ''} ${t.n === 2 ? 'first' : ''} ${t.n === 7 ? 'sel' : ''}">
    <i class="bar" style="background:${t.color}"></i>
    <div class="tname">${icon('left', 5, 8)}<span>${t.name === 'S01' ? '' : t.name}</span></div>
    <div class="tctl">${t.narrow ? '' : icon('boxplus', 7, 7)}<span class="playtag">PLAY</span>${t.narrow ? '' : icon('boxminus', 7, 7)}${icon('boxplus', 7, 7)}</div>
    <div class="theads">${t.narrow ? '' : '<span>Note</span>'}<span>${t.n === 2 ? '' : 'FX'}</span></div>
    <div class="tplay">${t.narrow ? '' : 'PLAY'}</div>
    ${lines.map(i => lineRow(t, i)).join('')}
  </div>`).join('');

// Song browser
const songs = ['DemoSong - Daed - Bears', 'DemoSong - Danoise - LFO', 'DemoSong - DBlue - Tension', 'DemoSong - Hunz - Soon Soon', 'DemoSong - It-Alien - ThePath 2.009', 'DemoSong - Medievil Music - Access Pwd', 'DemoSong - Phobium - Abrupt', 'DemoSong - Sunjammer - I Understand Now', 'Tutorial - Beat Slicing', 'Tutorial - Beat Synced Wobbles', 'Tutorial - Cross-Track Routing', 'Tutorial - Delay Column (Humanize)', 'Tutorial - Delay Column (SubLines)', 'Tutorial - Ducking (Sidechaining)', 'Tutorial - Glide &amp; Pitch', 'Tutorial - Lines Per Beat', 'Tutorial - Maybe Melodies', 'Tutorial - Meta Mixer', 'Tutorial - Sound Design &amp; Meta Devices'];
document.getElementById('files').innerHTML = `<li>${icon('folder', 13, 11)}..</li>` +
  songs.map(s => `<li>${icon('tri', 6, 9)}${icon('song', 11, 12)}${s}.xrns</li>`).join('');
```
